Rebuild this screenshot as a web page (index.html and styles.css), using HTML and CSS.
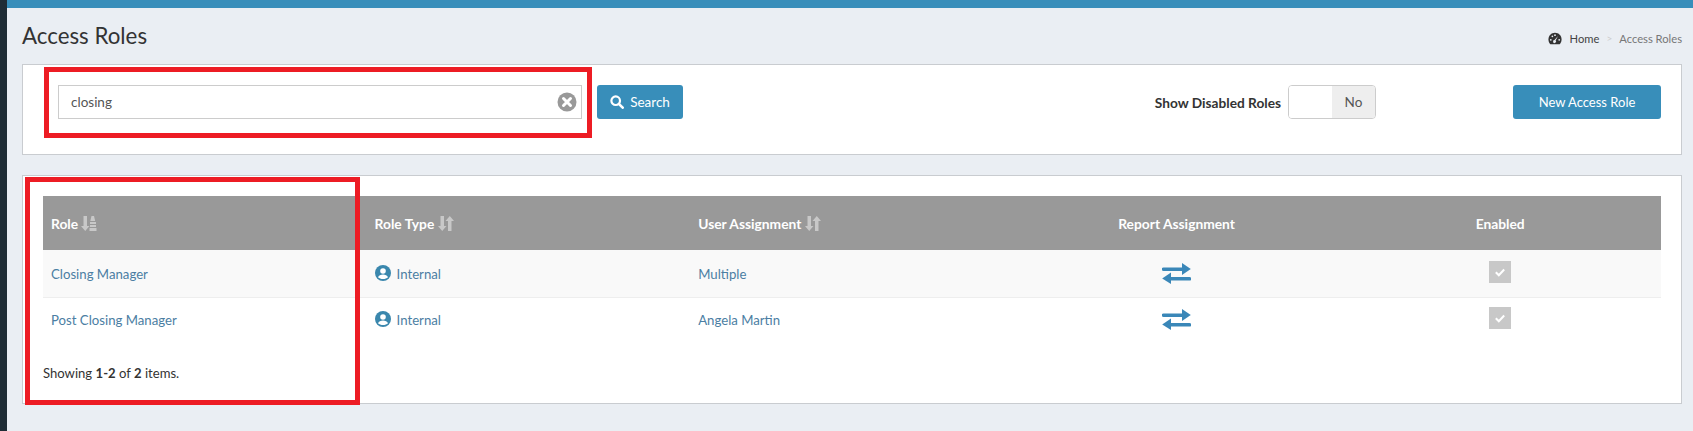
FILE: index.html
```html
<!DOCTYPE html>
<html lang="en">
<head>
<meta charset="utf-8">
<title>Access Roles</title>
<link rel="stylesheet" href="styles.css">
</head>
<body>
<div class="app">
  <aside class="sidebar"></aside>
  <div class="main">
    <div class="topbar"></div>
    <div class="content">
      <header class="page-head">
        <h1 class="title">Access Roles</h1>
        <nav class="crumbs">
          <svg class="crumb-icon" viewBox="0 0 16 14"><path d="M8 0.5C3.8 0.5 0.5 3.8 0.5 8c0 2 .7 3.900 1.900 5.200.2.2.4.3.7.3h9.800c.3 0 .5-.1.7-.3C14.800 11.900 15.500 10 15.500 8 15.500 3.800 12.200.5 8 .5z" fill="#333"/><circle cx="3.200" cy="8.500" r="1" fill="#eaeef3"/><circle cx="5" cy="4.500" r="1" fill="#eaeef3"/><circle cx="8" cy="3.200" r="1" fill="#eaeef3"/><circle cx="12.800" cy="8.500" r="1" fill="#eaeef3"/><path d="M11.500 4.200 8.700 9.300a1.700 1.700 0 1 1-1.300-.5z" fill="#eaeef3"/></svg>
          <span class="crumb-home">Home</span>
          <span class="crumb-sep">&gt;</span>
          <span class="crumb-current">Access Roles</span>
        </nav>
      </header>

      <section class="card toolbar">
        <div class="search-field">
          <input class="search-input" type="text" value="closing">
          <svg class="clear-icon" viewBox="0 0 20 20"><circle cx="10" cy="10" r="9.500" fill="#999"/><path d="M6.500 6.500l7 7M13.500 6.500l-7 7" stroke="#fff" stroke-width="3" stroke-linecap="round"/></svg>
        </div>
        <button class="btn btn-search" type="button">
          <svg class="search-icon" viewBox="0 0 14 14"><circle cx="5.700" cy="5.700" r="4.300" fill="none" stroke="#fff" stroke-width="2.200"/><path d="M8.800 8.800l3.900 3.900" stroke="#fff" stroke-width="2.600" stroke-linecap="round"/></svg>
          Search
        </button>
        <label class="toggle-label">Show Disabled Roles</label>
        <div class="toggle"><span class="toggle-off"></span><span class="toggle-no">No</span></div>
        <button class="btn btn-new" type="button">New Access Role</button>
        <div class="mark mark-search"></div>
      </section>

      <section class="card list">
        <table class="roles">
          <thead>
            <tr>
              <th>Role <svg class="sort" viewBox="0 0 16 15"><path d="M2.500 0h3.500v10h2.500L4.200 15 0 10h2.500z"/><path d="M10.500 0h2.500l1.200 5H9.300zM9 6h6v2H9zM9 9h6v2H9zM8.500 12h7v3h-7z"/></svg></th>
              <th>Role Type <svg class="sort" viewBox="0 0 16 15"><path d="M2.500 0h3.500v10h2.500L4.200 15 0 10h2.500z"/><path d="M10 15h3.500V5H16L11.800 0 7.500 5H10z"/></svg></th>
              <th>User Assignment <svg class="sort" viewBox="0 0 16 15"><path d="M2.500 0h3.500v10h2.500L4.200 15 0 10h2.500z"/><path d="M10 15h3.500V5H16L11.800 0 7.500 5H10z"/></svg></th>
              <th class="center">Report Assignment</th>
              <th class="center">Enabled</th>
            </tr>
          </thead>
          <tbody>
            <tr class="odd">
              <td><a class="link">Closing Manager</a></td>
              <td><svg class="user" viewBox="0 0 16 16"><circle cx="8" cy="8" r="8" fill="#3a87ad"/><circle cx="8" cy="6" r="2.800" fill="#fff"/><path d="M3 12.200c.8-1.800 2.700-2.600 5-2.600s4.200.8 5 2.600C11.800 13.400 10 14 8 14s-3.800-.6-5-1.800z" fill="#fff"/></svg><a class="link">Internal</a></td>
              <td><a class="link">Multiple</a></td>
              <td class="center"><svg class="swap" viewBox="0 0 29 21"><path d="M1.500 6.200h20" stroke="#3a87b8" stroke-width="3.600" stroke-linecap="round"/><path d="M20 0 28.800 6 20 12z" fill="#3a87b8"/><path d="M27.500 15.800h-20" stroke="#3a87b8" stroke-width="3.600" stroke-linecap="round"/><path d="M9 9.500 .2 15.500 9 21z" fill="#3a87b8"/></svg></td>
              <td class="center"><span class="check"><svg viewBox="0 0 22 22"><path d="M6.800 11.300l3 3 5.400-5.800" fill="none" stroke="#fff" stroke-width="2"/></svg></span></td>
            </tr>
            <tr>
              <td><a class="link">Post Closing Manager</a></td>
              <td><svg class="user" viewBox="0 0 16 16"><circle cx="8" cy="8" r="8" fill="#3a87ad"/><circle cx="8" cy="6" r="2.800" fill="#fff"/><path d="M3 12.200c.8-1.800 2.700-2.600 5-2.600s4.200.8 5 2.600C11.800 13.400 10 14 8 14s-3.800-.6-5-1.800z" fill="#fff"/></svg><a class="link">Internal</a></td>
              <td><a class="link">Angela Martin</a></td>
              <td class="center"><svg class="swap" viewBox="0 0 29 21"><path d="M1.500 6.200h20" stroke="#3a87b8" stroke-width="3.600" stroke-linecap="round"/><path d="M20 0 28.800 6 20 12z" fill="#3a87b8"/><path d="M27.500 15.800h-20" stroke="#3a87b8" stroke-width="3.600" stroke-linecap="round"/><path d="M9 9.500 .2 15.500 9 21z" fill="#3a87b8"/></svg></td>
              <td class="center"><span class="check"><svg viewBox="0 0 22 22"><path d="M6.800 11.300l3 3 5.400-5.800" fill="none" stroke="#fff" stroke-width="2"/></svg></span></td>
            </tr>
          </tbody>
        </table>
        <p class="summary">Showing <b>1-2</b> of <b>2</b> items.</p>
        <div class="mark mark-list"></div>
      </section>
    </div>
  </div>
</div>
</body>
</html>
```

FILE: styles.css
```css
* { box-sizing: border-box; }
html, body { margin: 0; height: 100%; }
body {
  font-family: "Lato", "Noto Sans", sans-serif;
  font-size: 13.200px;
  color: #333;
  background: #eaeef3;
  overflow: hidden;
}
.app { display: flex; height: 431px; }
.sidebar { width: 7px; flex: none; background: #1f2d36; }
.main { flex: 1; min-width: 0; }
.topbar { height: 8px; background: #388eba; }
.content { padding: 0 11px 0 15px; }

.page-head { display: flex; justify-content: space-between; height: 56px; }
.title { margin: 14px 0 0; font-size: 22.300px; line-height: 28px; font-weight: 400; color: #333; }
.crumbs { display: flex; align-items: center; height: 14px; margin-top: 23px; font-size: 11.200px; color: #777; }
.crumb-icon { width: 14px; height: 13px; margin-right: 8px; }
.crumb-home { color: #444; }
.crumb-sep { margin: 0 7px; color: #ccc; font-size: 10px; }

.card { position: relative; background: #fff; border: 1px solid #c9ccd0; }
.toolbar { display: flex; align-items: center; height: 91px; padding: 20px 20px 35px 35px; }
.search-field { position: relative; width: 524px; height: 34px; }
.search-input {
  width: 100%; height: 34px; padding: 0 12px;
  border: 1px solid #ccc; outline: 0;
  font: inherit; font-size: 13.500px; color: #555; background: #fff;
}
.clear-icon { position: absolute; right: 5px; top: 7px; width: 20px; height: 20px; }
.btn {
  display: flex; align-items: center; justify-content: center;
  height: 34px; padding: 0; border: 0; border-radius: 3px;
  background: #388eba; color: #fff; font: inherit;
}
.btn-search { width: 86px; margin-left: 15px; font-size: 13.500px; }
.search-icon { width: 14px; height: 14px; margin-right: 6px; }
.toggle-label { margin-left: auto; font-weight: 700; font-size: 13.700px; color: #333; }
.toggle {
  display: flex; width: 88px; height: 34px; margin: 0 137px 0 7px;
  border: 1px solid #ccc; border-radius: 4px; overflow: hidden;
}
.toggle-off { width: 43px; background: #fff; }
.toggle-no { flex: 1; display: flex; align-items: center; justify-content: center; background: #eee; color: #555; font-size: 13.500px; }
.btn-new { width: 148px; font-size: 13px; }

.list { height: 229px; margin-top: 20px; padding: 20px 20px 0; }
.roles { width: 100%; table-layout: fixed; border-collapse: collapse; }
.roles th {
  height: 54px; padding: 1px 8px 0; background: #999; color: #fff;
  font-weight: 700; font-size: 13.800px; text-align: left;
}
.roles td { height: 47px; padding: 1px 8px 0; border-bottom: 1px solid #eee; }
.roles tbody tr:last-child td { height: 46px; padding-top: 0; padding-bottom: 1px; border-bottom: 0; }
.roles .odd td { background: #f9f9f9; }
.roles .center { text-align: center; padding-left: 9px; padding-right: 7px; }
.sort { width: 16px; height: 15px; fill: #c8c8c8; vertical-align: -2px; }
.link { color: #4b7ea3; }
.user { width: 16px; height: 16px; margin-right: 6px; vertical-align: -2px; }
.swap { display: inline-block; width: 29px; height: 21px; vertical-align: middle; }
.check { display: inline-block; width: 22px; height: 22px; margin-bottom: 3px; background: #c8c8c8; vertical-align: middle; }
.check svg { display: block; width: 22px; height: 22px; }
.summary { margin: 20px 0 0; line-height: 20px; font-size: 13.100px; }

.mark { position: absolute; border: 5px solid #ed1c24; pointer-events: none; }
.mark-search { left: 21px; top: 2px; width: 548px; height: 71px; }
.mark-list { left: 2px; top: 1px; width: 335px; height: 228px; }
```
